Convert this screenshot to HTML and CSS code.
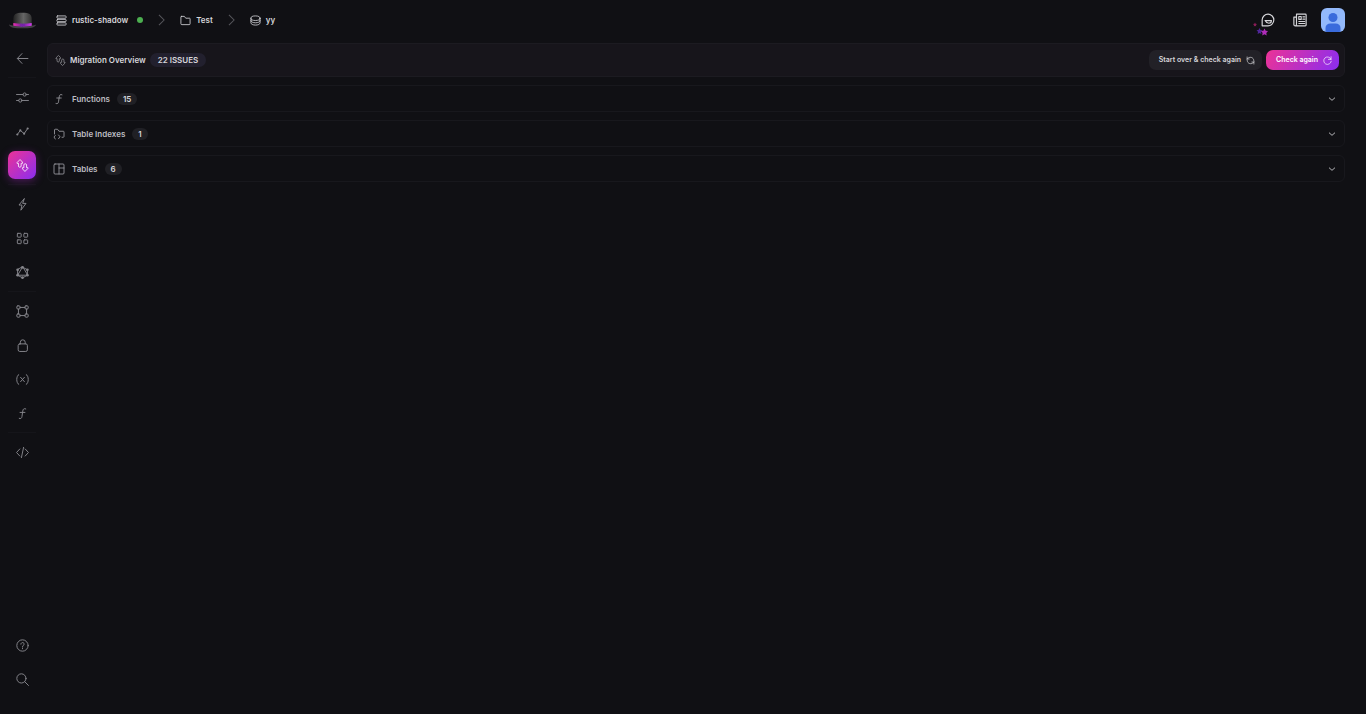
FILE: index.html
```html
<!DOCTYPE html>
<html lang="en">
<head>
    <meta charset="UTF-8">
    <meta name="viewport" content="width=device-width, initial-scale=1.0">
    <title>Migration Overview</title>
    <link rel="stylesheet" href="styles.css">
</head>
<body>
    <!-- Shared icons -->
    <svg class="sprite" aria-hidden="true">
        <symbol id="icon-migration" viewBox="0 0 24 24">
            <path d="M7 1.500L2 6.500V8h2.500v5c0 3 5 3 5 0V8H12V6.500z"/>
            <path d="M17 22.500l5-5V16h-2.500v-5c0-3-5-3-5 0v5H12v1.500z"/>
        </symbol>
        <symbol id="icon-function" viewBox="0 0 24 24">
            <path d="M18 3.500c-3.500-1.500-5 .5-5.500 4l-1.500 10c-.5 3.500-2 4.500-5 3.500M7.500 10h9"/>
        </symbol>
        <symbol id="icon-chevron" viewBox="0 0 24 24">
            <path d="M3 8l9 8 9-8"/>
        </symbol>
    </svg>

    <div class="app">
        <aside class="sidebar">
            <a class="logo" href="#" aria-label="Home">
                <svg viewBox="0 0 30 18">
                    <defs>
                        <linearGradient id="hat" x1="0" y1="0" x2="1" y2="0">
                            <stop offset="0" stop-color="#222"/>
                            <stop offset=".55" stop-color="#666"/>
                            <stop offset="1" stop-color="#333"/>
                        </linearGradient>
                        <linearGradient id="band" x1="0" y1="0" x2="1" y2="0">
                            <stop offset="0" stop-color="#e62fb0"/>
                            <stop offset=".5" stop-color="#6b1f98"/>
                            <stop offset="1" stop-color="#d63cf0"/>
                        </linearGradient>
                    </defs>
                    <path d="M1 12.500c3 1.500 6 1 8 1h13c3 0 5 .5 7-1-1 3.500-6 4-14 4s-13-.5-14-4z" fill="#424145"/>
                    <path d="M5.500 13.500V7C5.500 2 8 .5 15 .5S24.500 2 24.500 7v6.500c-4 1.500-15 1.500-19 0z" fill="url(#hat)"/>
                    <path d="M5.500 11c5 1 14 1 19 0v3c-5 1-14 1-19 0z" fill="url(#band)"/>
                    <path d="M13 11l2 1.500 2-1.500v4.500l-2-1-2 1z" fill="#7626a8"/>
                </svg>
            </a>
            <nav class="side-nav" aria-label="Project">
                <div class="nav-group">
                    <button class="nav-button" aria-label="Back">
                        <svg class="icon" viewBox="0 0 24 24"><path d="M22 12H3M11 3L2.500 12l8.500 9"/></svg>
                    </button>
                </div>
                <div class="nav-group">
                    <button class="nav-button" aria-label="Settings">
                        <svg class="icon" viewBox="0 0 24 24"><path d="M1 6.500h12M19 6.500h4M1 17.500h4M11 17.500h12"/><circle cx="16" cy="6.500" r="3"/><circle cx="8" cy="17.500" r="3"/></svg>
                    </button>
                    <button class="nav-button" aria-label="Metrics">
                        <svg class="icon" viewBox="0 0 24 24"><path d="M2.500 17.500L8 10l7 6 6.500-9.500"/><g class="solid"><circle cx="2.500" cy="17.500" r="2"/><circle cx="8" cy="10" r="2"/><circle cx="15" cy="16" r="2"/><circle cx="21.500" cy="6.500" r="2"/></g></svg>
                    </button>
                    <button class="nav-button active" aria-label="Migration">
                        <svg class="icon"><use href="#icon-migration"/></svg>
                    </button>
                </div>
                <div class="nav-group">
                    <button class="nav-button" aria-label="Realtime">
                        <svg class="icon" viewBox="0 0 24 24"><path d="M15 1.500L5.500 13H11l-2 9.500L18.500 10H13z"/></svg>
                    </button>
                    <button class="nav-button" aria-label="Components">
                        <svg class="icon" viewBox="0 0 24 24"><rect x="2.500" y="2.500" width="7" height="7" rx="1"/><rect x="14.500" y="2.500" width="7" height="7" rx="1"/><rect x="2.500" y="14.500" width="7" height="7" rx="1"/><rect x="14.500" y="14.500" width="7" height="7" rx="1"/></svg>
                    </button>
                    <button class="nav-button" aria-label="GraphQL">
                        <svg class="icon" viewBox="0 0 24 24"><path d="M12 2l9 5v10l-9 5-9-5V7zM12 2L3 17h18z"/><g class="solid"><circle cx="12" cy="2.500" r="2.500"/><circle cx="21" cy="7" r="2.500"/><circle cx="21" cy="17" r="2.500"/><circle cx="12" cy="21.500" r="2.500"/><circle cx="3" cy="17" r="2.500"/><circle cx="3" cy="7" r="2.500"/></g></svg>
                    </button>
                </div>
                <div class="nav-group">
                    <button class="nav-button" aria-label="Schema">
                        <svg class="icon" viewBox="0 0 24 24"><rect x="1.500" y="1.500" width="6" height="6" rx="2"/><rect x="16.500" y="1.500" width="6" height="6" rx="2"/><rect x="1.500" y="16.500" width="6" height="6" rx="2"/><rect x="16.500" y="16.500" width="6" height="6" rx="2"/><path d="M7.500 4.500h9M7.500 19.500h9M4.500 7.500v9M19.500 7.500v9"/></svg>
                    </button>
                    <button class="nav-button" aria-label="Permissions">
                        <svg class="icon" viewBox="0 0 24 24"><rect x="4" y="9" width="17" height="14" rx="3"/><path d="M8 9V6a4.500 4.500 0 0 1 9 0v3"/></svg>
                    </button>
                    <button class="nav-button" aria-label="Variables">
                        <svg class="icon" viewBox="0 0 24 24"><path d="M5 3C0 5 0 19 5 21M19 3c5 2 5 16 0 18M8.500 8l7 8M15.500 8l-7 8"/></svg>
                    </button>
                    <button class="nav-button" aria-label="Functions">
                        <svg class="icon"><use href="#icon-function"/></svg>
                    </button>
                </div>
                <div class="nav-group">
                    <button class="nav-button" aria-label="Code">
                        <svg class="icon" viewBox="0 0 24 24"><path d="M7 5.500L1 12l6 6.500M17 5.500l6 6.500-6 6.500M14 2.500l-4 19"/></svg>
                    </button>
                </div>
            </nav>
            <div class="side-footer">
                <button class="nav-button" aria-label="Help">
                    <svg class="icon" viewBox="0 0 24 24"><circle cx="12" cy="12" r="10.500"/><path d="M9 9.500c0-4 6-4 6 0 0 2.500-3 2-3 4.500M12 16.500v1.500"/></svg>
                </button>
                <button class="nav-button" aria-label="Search">
                    <svg class="icon" viewBox="0 0 24 24"><circle cx="10" cy="10" r="8.500"/><path d="M16 16l7 7"/></svg>
                </button>
            </div>
        </aside>

        <div class="content">
            <header class="topbar">
                <nav class="breadcrumbs" aria-label="Breadcrumb">
                    <a class="crumb" href="#">
                        <svg class="icon icon-small" viewBox="0 0 24 24"><rect x="2" y="2" width="20" height="5" rx="1.500"/><rect x="2" y="9.500" width="20" height="5" rx="1.500"/><rect x="2" y="17" width="20" height="5" rx="1.500"/></svg>
                        rustic-shadow
                        <span class="status-dot"></span>
                    </a>
                    <svg class="separator" viewBox="0 0 8 14"><path d="M1 1l6 6-6 6"/></svg>
                    <a class="crumb" href="#">
                        <svg class="icon icon-small" viewBox="0 0 24 24"><path d="M3 3h6.500l3 4H21c1 0 1 .5 1 1v11c0 1.500-.5 2-2 2H4c-1.500 0-2-.5-2-2V4c0-.5.500-1 1-1z"/></svg>
                        Test
                    </a>
                    <svg class="separator" viewBox="0 0 8 14"><path d="M1 1l6 6-6 6"/></svg>
                    <a class="crumb" href="#">
                        <svg class="icon icon-small" viewBox="0 0 24 24"><ellipse cx="12" cy="7" rx="10" ry="5"/><path d="M2 7v10c0 3 4.500 5 10 5s10-2 10-5V7M2 12c0 3 4.500 5 10 5s10-2 10-5"/></svg>
                        yy
                    </a>
                </nav>
                <div class="top-actions">
                    <button class="top-button" aria-label="Assistant">
                        <svg class="icon" viewBox="0 0 24 24"><path d="M2 22V11.500a10 10 0 1 1 10 10.500zM7 13h11c0 6-8 6-11 0z"/></svg>
                        <svg class="stars" viewBox="0 0 16 14">
                            <path d="M3 .5l.6 1.300 1.400.2-1 1 .2 1.500L3 3.800l-1.200.7L2 3 1 2l1.400-.2z" fill="#8b1d58"/>
                            <path d="M7.500 6l1 2 2 .3L9 9.800l.4 2.200-1.900-1-1.900 1 .4-2.200-1.500-1.500 2-.3z" fill="#50269a"/>
                            <path d="M12.500 6.500l1.200 2.200 2.300.4-1.700 1.800.4 2.600-2.200-1.200-2.300 1.200.4-2.600L9 9.100l2.400-.4z" fill="#b02dba"/>
                        </svg>
                    </button>
                    <button class="top-button" aria-label="News">
                        <svg class="icon" viewBox="0 0 24 24"><path d="M6 2h15c1 0 1.500.5 1.500 1.500v17c0 1-.5 1.500-1.500 1.500H4c-1.500 0-2.500-1-2.500-2.500V7H6M6 2v17c0 2-1 3-2 3M10 6h4v5h-4zM17 6.500h3M17 10.500h3M10 14.500h10M10 18h10"/></svg>
                    </button>
                    <button class="avatar" aria-label="Account">
                        <svg viewBox="0 0 24 24"><circle cx="12" cy="9.500" r="4.500"/><path d="M4.500 24v-4c0-3 2-4.500 5-4.500h5c3 0 5 1.500 5 4.500v4z"/></svg>
                    </button>
                </div>
            </header>

            <main class="main">
                <section class="overview">
                    <svg class="icon icon-small"><use href="#icon-migration"/></svg>
                    <h1>Migration Overview</h1>
                    <span class="badge badge-issues">22 ISSUES</span>
                    <div class="overview-actions">
                        <button class="button">
                            Start over &amp; check again
                            <svg class="icon" viewBox="0 0 24 24"><path d="M3 8V2.500M3 8h5.500M3 8c5-8 18-6 18 5M21 16v5.500M21 16h-5.500M21 16c-5 8-18 6-18-5"/></svg>
                        </button>
                        <button class="button button-primary">
                            Check again
                            <svg class="icon" viewBox="0 0 24 24"><path d="M21.500 2v7h-7M21.500 9a10 10 0 1 0 .5 5"/></svg>
                        </button>
                    </div>
                </section>

                <button class="row" aria-expanded="false">
                    <svg class="icon"><use href="#icon-function"/></svg>
                    <span class="row-title">Functions</span>
                    <span class="badge">15</span>
                    <svg class="chevron"><use href="#icon-chevron"/></svg>
                </button>
                <button class="row" aria-expanded="false">
                    <svg class="icon" viewBox="0 0 24 24"><path d="M3 12V4c0-1 .5-1.500 1.500-1.500H9l3 4h8.500c1 0 1.500.5 1.500 1.500v9c0 1-.5 1.500-1.500 1.500H18M4.500 15L2 18l2.500 4M11 14l3 3.500-3 4"/></svg>
                    <span class="row-title">Table Indexes</span>
                    <span class="badge">1</span>
                    <svg class="chevron"><use href="#icon-chevron"/></svg>
                </button>
                <button class="row" aria-expanded="false">
                    <svg class="icon" viewBox="0 0 24 24"><rect x="2" y="2" width="20" height="20" rx="2"/><path d="M12 2v20M12 10h10"/></svg>
                    <span class="row-title">Tables</span>
                    <span class="badge">6</span>
                    <svg class="chevron"><use href="#icon-chevron"/></svg>
                </button>
            </main>
        </div>
    </div>
</body>
</html>
```
FILE: styles.css
```css
* {
    box-sizing: border-box;
}

body {
    margin: 0;
    background-color: #101014;
    color: #d6d6da;
    font-family: Inter, "Liberation Sans", sans-serif;
    font-size: 8px;
    line-height: 12px;
}

button {
    margin: 0;
    padding: 0;
    border: none;
    background: none;
    color: inherit;
    font: inherit;
    cursor: pointer;
}

a {
    color: inherit;
    text-decoration: none;
}

.sprite {
    display: none;
}

.icon {
    width: 13px;
    height: 13px;
    flex: none;
    fill: none;
    stroke: currentColor;
    stroke-width: 1.8;
    stroke-linecap: round;
    stroke-linejoin: round;
}

.icon-small {
    width: 11px;
    height: 11px;
}

.icon .solid {
    fill: currentColor;
    stroke: none;
}

.app {
    display: flex;
    min-height: 100vh;
}

/* Sidebar */
.sidebar {
    display: flex;
    flex-direction: column;
    width: 47px;
    padding: 12px 11px 21px 8px;
}

.logo {
    display: block;
    height: 32px;
}

.logo svg {
    display: block;
    width: 29px;
    height: 18px;
}

.nav-group {
    display: flex;
    flex-direction: column;
    gap: 6px;
    padding-bottom: 5px;
    margin-bottom: 5px;
    border-bottom: 1px solid #15151a;
}

.nav-group:last-child {
    border-bottom: none;
}

.nav-button {
    display: flex;
    align-items: center;
    justify-content: center;
    width: 28px;
    height: 28px;
    border-radius: 7px;
    color: #85858b;
}

.nav-button.active {
    background: linear-gradient(135deg, #ec3396, #8a2df0);
    box-shadow: 0 2px 8px rgba(170, 40, 200, 0.4);
    color: #fff;
}

.nav-button.active .icon {
    stroke-width: 1.5;
}

.side-footer {
    display: flex;
    flex-direction: column;
    gap: 6px;
    margin-top: auto;
}

/* Top bar */
.content {
    flex: 1;
    padding-right: 21px;
}

.topbar {
    display: flex;
    align-items: center;
    justify-content: space-between;
    height: 40px;
    padding-left: 9px;
}

.breadcrumbs {
    display: flex;
    align-items: center;
    gap: 15px;
    font-weight: 600;
}

.crumb {
    display: flex;
    align-items: center;
    gap: 5px;
}

.status-dot {
    width: 6px;
    height: 6px;
    margin-left: 4px;
    border-radius: 50%;
    background-color: #4caf50;
}

.separator {
    width: 7px;
    height: 12px;
    fill: none;
    stroke: #55555b;
    stroke-width: 1.2;
}

.top-actions {
    display: flex;
    align-items: center;
    gap: 10px;
}

.top-button {
    position: relative;
    display: flex;
    align-items: center;
    justify-content: center;
    width: 22px;
    height: 22px;
}

.top-button .icon {
    width: 14px;
    height: 14px;
    stroke-width: 2;
}

/* Sparkle over the corner of the assistant icon */
.stars {
    position: absolute;
    left: -5px;
    bottom: -5px;
    width: 16px;
    height: 14px;
}

.avatar {
    width: 24px;
    height: 24px;
    overflow: hidden;
    border-radius: 6px;
    background-color: #93b9fb;
}

.avatar svg {
    display: block;
    fill: #3a6bdc;
}

/* Migration overview */
.main {
    display: flex;
    flex-direction: column;
    gap: 8px;
    padding-top: 3px;
}

.overview {
    display: flex;
    align-items: center;
    gap: 4px;
    height: 34px;
    padding: 0 5px 0 7px;
    border: 1px solid #1c1b21;
    border-radius: 6px;
    background-color: #17151b;
}

.overview .icon {
    color: #85858b;
}

.overview h1 {
    margin: 0;
    font-size: 8px;
    font-weight: 600;
}

.badge {
    padding: 0 6px;
    border-radius: 6px;
    background-color: #202025;
    font-size: 8px;
    font-weight: 600;
}

.badge-issues {
    padding: 1px 8px;
    border-radius: 7px;
    background-color: #22202e;
}

.overview-actions {
    display: flex;
    gap: 4px;
    margin-left: auto;
}

.button {
    display: flex;
    align-items: center;
    gap: 5px;
    height: 20px;
    padding: 0 7px 0 10px;
    border-radius: 7px;
    background-color: #222127;
    font-size: 7px;
    font-weight: 600;
}

.overview .button .icon {
    width: 9px;
    height: 9px;
    color: inherit;
}

.button-primary {
    background: linear-gradient(120deg, #ec3396, #8a2df0);
    color: #fff;
}

.row {
    display: flex;
    align-items: center;
    gap: 7px;
    height: 27px;
    padding: 0 8px 0 5px;
    border: 1px solid #18181d;
    border-radius: 6px;
    font-weight: 600;
    text-align: left;
}

.row .icon {
    width: 12px;
    height: 12px;
    color: #94949a;
}

.row-title {
    color: #bdbdc2;
}

.chevron {
    width: 8px;
    height: 8px;
    margin-left: auto;
    fill: none;
    stroke: #b4b4b8;
    stroke-width: 3;
}
```
